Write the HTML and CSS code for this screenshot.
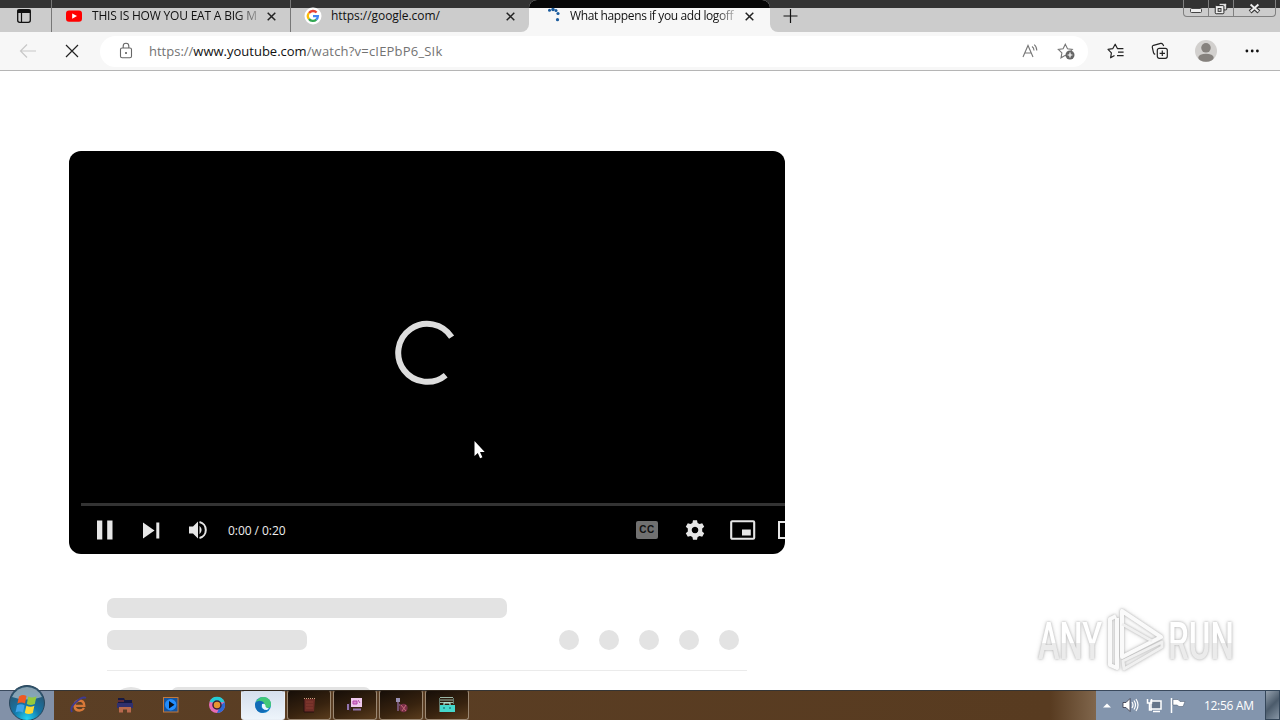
FILE: index.html
```
<!DOCTYPE html>
<html lang="en">
<head>
    <meta charset="UTF-8">
    <title>What happens if you add logoff</title>
    <link rel="stylesheet" href="styles.css">
</head>
<body>
<div class="tabs">
    <div class="tab-menu">
        <svg width="16" height="16" viewBox="0 0 16 16"><rect x="1.7" y="1.7" width="12.6" height="12.6" rx="2" fill="none" stroke="#111" stroke-width="1.3"/><path d="M2 2h12v2.500H2zM5.500 5v9" fill="#111" stroke="#111" stroke-width="1.2"/></svg>
    </div>
    <div class="tab tab-first">
        <svg class="favicon" width="18" height="18" viewBox="0 0 18 18"><rect x="1" y="3.4" width="16" height="11.4" rx="3" fill="#f00"/><path d="M7.2 6.4v5.4L12 9.1z" fill="#fff"/></svg>
        <span class="title fade-title">THIS IS HOW YOU EAT A BIG M</span>
        <svg class="close" width="11" height="11" viewBox="0 0 11 11"><path d="M1.7 1.7l7.6 7.6M9.3 1.7L1.7 9.3"/></svg>
    </div>
    <div class="tab tab-second">
        <svg class="favicon" width="18" height="18" viewBox="0 0 18 18"><circle cx="9" cy="9" r="8.5" fill="#fff"/><g fill="none" stroke-width="2.3"><path d="M5 6A5 5 0 0 1 12.6 5.5" stroke="#ea4335"/><path d="M5 5.9A5 5 0 0 0 5 12.1" stroke="#fbbc05"/><path d="M5 12A5 5 0 0 0 12.3 12.7" stroke="#34a853"/><path d="M9 9.2h4.9A5 5 0 0 1 12.2 12.7" stroke="#4285f4"/></g></svg>
        <span class="title">https://google.com/</span>
        <svg class="close" width="11" height="11" viewBox="0 0 11 11"><path d="M1.7 1.7l7.6 7.6M9.3 1.7L1.7 9.3"/></svg>
    </div>
    <div class="tab tab-active">
        <svg class="favicon" width="18" height="18" viewBox="0 0 18 18" fill="#1b5c9e"><circle cx="4.500" cy="3.300" r="1.500"/><circle cx="8" cy="2.500" r="1.800"/><circle cx="11" cy="3.500" r="1.500"/><circle cx="13" cy="6.500" r="1.600"/><circle cx="12.5" cy="12.7" r="1.600"/></svg>
        <span class="title fade-title">What happens if you add logoff</span>
        <svg class="close" width="11" height="11" viewBox="0 0 11 11"><path d="M1.7 1.7l7.6 7.6M9.3 1.7L1.7 9.3"/></svg>
    </div>
    <div class="tabs-rest">
        <svg class="new-tab" width="16" height="16" viewBox="0 0 16 16"><path d="M8.5 1v14M1.5 8h14" stroke="#111" stroke-width="1.2"/></svg>
        <div class="window-buttons">
            <div class="wb wb-min"><svg width="24" height="16" viewBox="0 0 24 16"><rect x="6.500" y="8.5" width="11" height="4" rx="1" fill="#eee" stroke="#444"/></svg></div>
            <div class="wb wb-max"><svg width="24" height="16" viewBox="0 0 25 16"><rect x="10.5" y="3" width="8" height="7" rx="1" fill="#ddd" stroke="#222"/><rect x="6.5" y="5.5" width="9" height="8.5" rx="1" fill="#eee" stroke="#222"/><rect x="9.5" y="8.5" width="3" height="3" fill="#ccc" stroke="#333"/></svg></div>
            <div class="wb wb-close"><svg width="41" height="16" viewBox="0 0 42 16"><path d="M16.5 4l9 8M25.5 4l-9 8" stroke="#333" stroke-width="4.2"/><path d="M17 4.500l8 7M25 4.500l-8 7" stroke="#eee" stroke-width="2"/></svg></div>
        </div>
    </div>
</div>

<div class="toolbar">
    <svg class="back" width="18" height="16" viewBox="0 0 18 16"><path d="M17 8H2M8 1.5L1.5 8 8 14.5" fill="none" stroke="#c8c8c8" stroke-width="1.2"/></svg>
    <svg class="stop" width="14" height="14" viewBox="0 0 14 14"><path d="M1 1l12 12M13 1L1 13" stroke="#222" stroke-width="1.2"/></svg>
    <div class="address">
        <svg class="lock" width="14" height="18" viewBox="0 0 14 18"><rect x="1.5" y="6" width="11" height="9.8" rx="1.6" fill="none" stroke="#666" stroke-width="1.1"/><path d="M4.2 6V4a2.8 2.8 0 0 1 5.6 0v2" fill="none" stroke="#666" stroke-width="1.1"/><circle cx="7" cy="11" r="1" fill="#555"/></svg>
        <div class="url"><span class="url-a">https://</span><b class="url-b">www.youtube.com</b><span class="url-c">/watch?v=cIEPbP6_SIk</span></div>
        <svg class="read" width="18" height="18" viewBox="0 0 18 18" fill="none" stroke="#777" stroke-width="1.1"><path d="M2 15L7 3.5 12 15M3.7 11h6.6M11 4.5q2 1.3 2 4M13.2 2.6q2.6 2 2.6 6"/></svg>
        <svg class="fav-add" width="18" height="18" viewBox="0 0 18 18"><path d="M9.5 14L8.3 13.3 4 15.8l.9-4.9L1.3 7.4l4.8-.7L8.3 2.2l2.2 4.5 4.8.7-1.5 1.5" fill="none" stroke="#777" stroke-width="1.1"/><circle cx="13" cy="13" r="4.5" fill="#666"/><path d="M13 10.6v4.8M10.6 13h4.8" stroke="#fff" stroke-width="1.2"/></svg>
    </div>
    <svg class="favorites" width="18" height="18" viewBox="0 0 18 18" fill="none" stroke="#222" stroke-width="1.2"><path d="M7.5 13.4l-3.9 2.4.8-4.9L1 7.4l4.7-.7L8.2 2.2l2.2 4.4h6M11 10.2h5.6M10 13.6h6.6" stroke-linejoin="round"/></svg>
    <svg class="collections" width="18" height="18" viewBox="0 0 18 18" fill="none" stroke="#222" stroke-width="1.2"><rect x="6.3" y="6.3" width="10" height="10" rx="2"/><path d="M11.3 8.6v5.4M8.6 11.3H14M4.2 12.3Q2.8 12 2.5 10.6L1.3 5.3Q1 3.8 2.5 3.3L9.7 1.4Q11 1.2 11.8 2.3L12.7 4"/></svg>
    <svg class="profile" width="22" height="22" viewBox="0 0 22 22"><circle cx="11" cy="11" r="11" fill="#d2d0ce"/><circle cx="11" cy="7.8" r="4.8" fill="#85817d"/><ellipse cx="11" cy="17.7" rx="7.7" ry="4" fill="#85817d"/></svg>
    <svg class="more" width="14" height="4" viewBox="0 0 14 4" fill="#111"><circle cx="1.9" cy="2" r="1.4"/><circle cx="7.2" cy="2" r="1.4"/><circle cx="12.4" cy="2" r="1.4"/></svg>
</div>

<div class="page">
    <div class="player">
        <div class="screen">
            <svg width="66" height="66" viewBox="0 0 66 66"><path d="M58.6 18.1A29 29 0 1 0 52.7 56.2" fill="none" stroke="#ddd" stroke-width="6"/></svg>
        </div>
        <div class="progress"></div>
        <div class="controls">
            <svg class="pause" width="16" height="20" viewBox="0 0 16 20" fill="#e6e6e6"><path d="M0 .5h5.3v19H0zM10.2.5h5.3v19h-5.3z"/></svg>
            <svg class="next" width="17" height="17" viewBox="0 0 17 17" fill="#e6e6e6"><path d="M0 .5l11.5 8L0 16.5zM13.3.5h3v16h-3z"/></svg>
            <svg class="volume" width="20" height="20" viewBox="0 0 20 20"><path d="M1 6.5h4l5-5v17l-5-5H1zM11.5 5.8q4.2 4.2 0 8.4z" fill="#e6e6e6"/><path d="M11.5 2.1a8.1 8.1 0 0 1 0 15.8" fill="none" stroke="#e6e6e6" stroke-width="2"/></svg>
            <span class="time">0:00 / 0:20</span>
            <div class="cc">CC</div>
            <svg class="gear" width="20" height="20" viewBox="0 0 20 20"><path fill="#e6e6e6" fill-rule="evenodd" d="M8 .3h4l.6 2.6 2 1.2 2.6-.9 2 3.5-2 1.9v2.8l2 1.9-2 3.5-2.6-.9-2 1.2-.6 2.6H8l-.6-2.6-2-1.2-2.6.9-2-3.5 2-1.9V8.600l-2-1.900 2-3.500 2.600.9 2-1.200zM10 6.700a3.300 3.300 0 1 0 .01 0z"/></svg>
            <svg class="mini" width="26" height="20" viewBox="0 0 26 20"><rect x="1.2" y="1.200" width="23" height="17.500" rx="1" fill="none" stroke="#e6e6e6" stroke-width="2.100"/><path d="M12 9.500h8.800v6H12z" fill="#e6e6e6"/></svg>
            <div class="theater"></div>
        </div>
    </div>

    <div class="skeleton">
        <div class="bar bar-long"></div>
        <div class="row">
            <div class="bar bar-short"></div>
            <div class="dots"><i></i><i></i><i></i><i></i><i></i></div>
        </div>
        <div class="owner">
            <div class="avatar"></div>
            <div class="bar bar-owner"></div>
        </div>
    </div>
</div>

<div class="taskbar">
    <div class="start">
        <svg width="54" height="36" viewBox="0 0 54 36">
            <defs><radialGradient id="orb" cx=".5" cy=".95" r=".85"><stop offset="0" stop-color="#20d4f4"/><stop offset=".45" stop-color="#1476a8"/><stop offset="1" stop-color="#2d536c"/></radialGradient></defs>
            <circle cx="27" cy="19" r="17.500" fill="url(#orb)" stroke="#29465c"/>
            <path d="M12 13Q17 3 27 3T42 13Q27 18 12 13z" fill="#b8cbd6" opacity=".65"/>
            <path d="M19 12.500q4-2.500 7.500-.5L25 19.500q-4-2-7.600.1z" fill="#ee5a24"/>
            <path d="M28.300 12.600q4 2 8.200-.4L34.800 20q-4 2-8 .1z" fill="#95c93d"/>
            <path d="M17 21.300q4-2 7.600 0L23 28.500q-4-2-7.500 0z" fill="#3fa3e8"/>
            <path d="M26.400 21.800q4 2 8-.1L32.800 29q-4 2-8 .1z" fill="#fdd835"/>
        </svg>
    </div>
    <div class="pinned">
        <svg width="18" height="18" viewBox="0 0 18 18" fill="none"><path d="M4.500 9.800h9.800Q14 4.500 9.300 4.500 4.500 5 4.500 10q.5 4.500 5 4.500 3 0 4.500-2.500" stroke="#d87838" stroke-width="2.300"/><path d="M2 16Q-.5 12 6 6T16 2" stroke="#3e3b91" stroke-width="1.800"/></svg>
        <svg width="18" height="18" viewBox="0 0 18 18"><path d="M2 2h6l1 2h7v5H2z" fill="#171942"/><path d="M1 7h16v5H1z" fill="#30306e"/><path d="M3 16.500V11h12v5.500h-4v-3H7v3z" fill="#b9694d"/><path d="M2 5h6" stroke="#a33f32"/></svg>
        <svg width="18" height="18" viewBox="0 0 18 18"><rect x="1.500" y="1.500" width="14.500" height="14.500" fill="#17539a" stroke="#c1793d"/><circle cx="8.700" cy="8.700" r="5.700" fill="#228eff"/><path d="M7 5v7.500l5.500-3.700z" fill="#07101d"/></svg>
        <svg width="18" height="18" viewBox="0 0 18 18"><circle cx="9" cy="9" r="8" fill="#e66cb5"/><path d="M1.500 6A8 8 0 0 1 16.500 6L9 7z" fill="#24cdd5"/><path d="M16.500 6A8 8 0 0 1 9 17l3-7z" fill="#2c69d5"/><circle cx="9" cy="9" r="4" fill="#e99530" stroke="#38203b" stroke-width="1.500"/></svg>
    </div>
    <div class="windows">
        <div class="task task-on"><svg width="18" height="18" viewBox="0 0 18 18"><circle cx="9" cy="9" r="8" fill="#1688ce"/><path d="M2 6Q5 .5 10 1q7 1 7 7.500 0 4-5 3.500-2-.5-1-2 0-3-3-3-3 .2-6-1z" fill="#42c878"/><path d="M1 8q2-4 6-3 3 .5 3 3-3-.5-3.500 2Q7 14 14 14 8 19 3.500 15 1 12 1 8z" fill="#126bb6"/><path d="M8 8q3-1 3.500 1.500Q11 12 15 12.300l-2 1.700Q7 14 8 8z" fill="#eaf5ff"/></svg></div>
        <div class="task"><svg width="18" height="18" viewBox="0 0 18 18"><path d="M4 3h11l-1 13H4z" fill="#6e2d26"/><path d="M4 3v13h10" stroke="#281010" fill="none"/><path d="M4 2.500h11" stroke="#d09d81" stroke-dasharray="1 1"/><path d="M6 6h7M6 9h7M6 12h7" stroke="#863d31"/></svg></div>
        <div class="task"><svg width="18" height="18" viewBox="0 0 18 18"><path d="M5 2h11v9H5z" fill="#efc9ee"/><path d="M7 5h4v3H7zM12 4l2 3" stroke="#b440ab" fill="#d889d2"/><path d="M2 8v6M7 13.500h8" stroke="#9174ae" stroke-width="2" fill="none"/><path d="M4 7v8" stroke="#3a2446"/></svg></div>
        <div class="task"><svg width="18" height="18" viewBox="0 0 18 18"><path d="M4 2h4v4H4z" fill="#9a91b3"/><path d="M6 6v9M6 8l5 3" stroke="#73516d" stroke-width="2"/><circle cx="11.500" cy="12" r="4.200" fill="#792f48"/><path d="M9 9l5 6M14 9l-4 6" stroke="#c76b79"/></svg></div>
        <div class="task"><svg width="18" height="18" viewBox="0 0 18 18"><path d="M2 1.500h13M2 4h13M2 6.500h13" stroke="#9bb8a7"/><path d="M1.500 2v14M15.500 2v6" stroke="#62796d"/><path d="M2 9h15v7H2z" fill="#45d8cc"/><path d="M6 9V7h6v2" stroke="#c5fff1" fill="none"/><path d="M6 11v2M12 11v2" stroke="#145c5d"/></svg></div>
    </div>
    <div class="tray">
        <svg class="arrow" width="8" height="5" viewBox="0 0 8 5"><path d="M0 4.500L4 .5l4 4z" fill="#fff"/></svg>
        <svg class="sound" width="17" height="14" viewBox="0 0 17 14"><path d="M1 4.500h3l4-4v13l-4-4H1z" fill="#fff" stroke="#334" stroke-width=".8"/><path d="M10 4q2 3 0 6M12 2.500q3 4.500 0 9M14 1q4 6 0 12" fill="none" stroke="#fff" stroke-width="1.200"/></svg>
        <svg class="network" width="17" height="15" viewBox="0 0 17 15"><path d="M5 3h10v8H5z" fill="#65758a" stroke="#fff" stroke-width="1.500"/><path d="M7 13.500h7M1.500 1v4h4V1M3.500 5v7H6" stroke="#fff" stroke-width="1.500" fill="none"/></svg>
        <svg class="flag" width="16" height="15" viewBox="0 0 16 15"><path d="M1.500 0v15" stroke="#fff" stroke-width="1.500"/><path d="M3 1.500h5l2 2h5l-2 5H9L7 7H3z" fill="#fff" stroke="#45546a" stroke-width=".5"/></svg>
        <span class="clock">12:56 AM</span>
        <div class="show-desktop"></div>
    </div>
</div>

<svg class="cursor" width="12" height="20" viewBox="0 0 12 20"><path d="M.5 1v15l3.300-3 2.300 5.300 2.300-1L6 12h4.700z" fill="#fff"/></svg>

<!-- watermark -->
<svg class="watermark" width="215" height="72" viewBox="0 0 215 72">
    <defs><linearGradient id="wm" x1="0" y1="0" x2="0" y2="1"><stop offset=".53" stop-color="#fff"/><stop offset=".53" stop-color="#ebebeb"/></linearGradient></defs>
    <g fill="url(#wm)">
        <text x="8" y="53" textLength="64" lengthAdjust="spacingAndGlyphs">ANY</text>
        <text x="138" y="53" textLength="66" lengthAdjust="spacingAndGlyphs">RUN</text>
    </g>
    <g fill="none" stroke-width="4" stroke-linejoin="round">
        <path d="M86 10l-6 3v46l7 3V12" stroke="#fafafa"/>
        <path d="M92 5v46L131 31z" stroke="#fafafa"/>
        <path d="M92 18l30 17M93 55l39-19v5L94 63z" stroke="#f0f0f0" stroke-width="3"/>
    </g>
</svg>
</body>
</html>
```
FILE: styles.css
```
*{margin: 0; padding: 0; box-sizing: border-box}
html, body {
    width: 1280px;
    height: 720px;
    overflow: hidden;
}
body {
    display: flex;
    flex-direction: column;
    position: relative;
    background: white;
    font-family: "Open Sans", "Noto Sans", sans-serif;
    font-size: 12px;
}
svg {
    display: block;
    flex: none;
}
/* Tabs */
.tabs {
    display: flex;
    height: 32px;
    background: #f7f7f7;
}
.tab-menu, .tab, .tabs-rest {
    display: flex;
    align-items: center;
    height: 32px;
    background: linear-gradient(#333333 8px, #cccccc 8px);
}
.tab-menu {
    width: 52px;
    padding-left: 16px;
    border-right: 1px solid #777777;
}
.tab-first {
    width: 239px;
    padding-left: 13px;
    border-right: 1px solid #777777;
}
.tab-second {
    width: 238px;
    padding-left: 13px;
    border-bottom-right-radius: 8px;
}
.tab-active {
    width: 241px;
    padding-left: 16px;
    background: linear-gradient(#080808 8px, #f7f7f7 8px);
    border-radius: 8px 8px 0 0;
    box-shadow: 0 -8px 0 #333333;
}
.title {
    width: 168px;
    margin-left: 9px;
    overflow: hidden;
    white-space: nowrap;
    color: #111111;
    line-height: 20px;
}
.tab-first .title {letter-spacing: -0.2px}
.tab-active .title {letter-spacing: -0.38px; margin-left: 7px}
.tab-second .title {letter-spacing: -0.05px}
.fade-title {
    -webkit-mask-image: linear-gradient(90deg, black 145px, transparent 172px);
    mask-image: linear-gradient(90deg, black 145px, transparent 172px);
}
.close {
    margin-left: 6px;
    stroke: #222222;
    stroke-width: 1.5;
}
.tabs-rest {
    flex: 1;
    border-bottom-left-radius: 8px;
}
.new-tab {
    margin-left: 12px;
}
.window-buttons {
    display: flex;
    align-self: flex-start;
    height: 17px;
    margin: 0 4px 0 auto;
    border: 1px solid #808080;
    border-top: 0;
    border-radius: 0 0 4px 4px;
}
.wb + .wb {
    border-left: 1px solid #808080;
}
/* Address line */
.toolbar {
    display: flex;
    align-items: center;
    height: 39px;
    padding: 0 21px 0 19px;
    background: #f7f7f7;
    border-bottom: 1px solid #b5b5b5;
}
.stop {
    margin-left: 28px;
}
.address {
    display: flex;
    flex: none;
    align-items: center;
    width: 988px;
    height: 31px;
    margin-left: 21px;
    padding-left: 19px;
    background: white;
    border-radius: 16px;
}
.url {
    display: flex;
    margin-left: 16px;
    color: #737373;
    font-size: 13px;
    line-height: 20px;
}
.url-b {
    color: #111111;
    font-weight: normal;
}
.url-c {
    letter-spacing: 0.2px;
}
.read {
    margin-left: auto;
}
.fav-add {
    margin: 0 13px 0 18px;
}
.favorites {
    margin-left: 19px;
}
.collections {
    margin-left: 26px;
}
.profile {
    margin-left: 26px;
}
.more {
    margin-left: 28px;
}
/* Page */
.page {
    height: 619px;
    padding: 80px 0 0 69px;
    overflow: hidden;
}
.player {
    display: flex;
    flex-direction: column;
    width: 716px;
    height: 403px;
    overflow: hidden;
    background: black;
    border-radius: 12px;
}
.screen {
    height: 352px;
    padding: 168px 0 0 324px;
}
.progress {
    height: 3px;
    margin-left: 12px;
    background: #333333;
}
.controls {
    display: flex;
    align-items: center;
    height: 48px;
    padding-left: 28px;
}
.next {
    margin-left: 30px;
}
.volume {
    margin-left: 28px;
}
.time {
    flex: none;
    width: 70px;
    margin-left: 20px;
    color: #eeeeee;
    white-space: nowrap;
    letter-spacing: -0.05px;
}
.cc {
    flex: none;
    width: 22px;
    height: 18px;
    margin-left: 338px;
    background: #707070;
    border-radius: 2px;
    color: #111111;
    font: bold 10px/18px "Liberation Sans", sans-serif;
    letter-spacing: 0.5px;
    text-align: center;
}
.gear {
    margin-left: 27px;
}
.mini {
    margin-left: 25px;
}
.theater {
    flex: none;
    width: 26px;
    height: 18px;
    margin-left: 22px;
    border: 2px solid #e6e6e6;
}
/* Placeholders */
.skeleton {
    width: 640px;
    margin: 44px 0 0 38px;
}
.bar {
    height: 20px;
    background: #e3e3e3;
    border-radius: 7px;
}
.bar-long {width: 400px}
.bar-short {width: 200px}
.bar-owner {width: 200px}
.row {
    display: flex;
    justify-content: space-between;
    height: 53px;
    padding: 12px 8px 0 0;
    border-bottom: 1px solid #ebebeb;
}
.dots {
    display: flex;
    gap: 20px;
}
.dots i {
    width: 20px;
    height: 20px;
    background: #e3e3e3;
    border-radius: 50%;
}
.owner {
    display: flex;
    gap: 20px;
    padding: 16px 0 0 4px;
}
.avatar {
    width: 40px;
    height: 40px;
    background: #e3e3e3;
    border-radius: 50%;
}
/* Taskbar */
.taskbar {
    display: flex;
    height: 30px;
    background: linear-gradient(90deg, #5b3f25 0, #583b20 1050px, #80664c 1096px);
    box-shadow: inset 0 1px 0 #343434;
}
.start {
    width: 54px;
    height: 30px;
    background: linear-gradient(#3b4a5d 1px, #8291a8 1px);
}
.start svg {
    margin-top: -6px;
}
.pinned {
    display: flex;
    align-items: center;
    gap: 28px;
    width: 187px;
    padding-left: 16px;
}
.windows {
    display: flex;
    gap: 2px;
}
.task {
    display: flex;
    align-items: center;
    justify-content: center;
    width: 44px;
    height: 30px;
    background: linear-gradient(160deg, #160e08, #38230f 60%, #5a3c1d);
    border: 1px solid #9b8873;
    border-top-color: #30261c;
    border-radius: 3px;
}
.task-on {
    background: linear-gradient(#d5dfed, #edf4fb);
    border-color: #e8eef5;
    border-top-color: #30261c;
}
.tray {
    display: flex;
    align-items: center;
    width: 184px;
    margin-left: auto;
    padding-left: 7px;
    background: linear-gradient(#3b4a5d 1px, #8395ad 1px);
}
.sound {
    margin-left: 11px;
}
.network {
    margin-left: 7px;
}
.flag {
    margin-left: 7px;
}
.clock {
    width: 52px;
    margin-left: 18px;
    color: white;
    white-space: nowrap;
    letter-spacing: -0.3px;
}
.show-desktop {
    width: 15px;
    height: 30px;
    margin-left: auto;
    background: linear-gradient(135deg, #95a1ae, #4b5b6b 50%, #8796a6);
    border: 1px solid #35475a;
}
/* Over the page */
.cursor {
    position: absolute;
    left: 474px;
    top: 440px;
}
.watermark {
    position: absolute;
    left: 1030px;
    top: 606px;
    filter: drop-shadow(0 0 1px #b5b5b5) drop-shadow(0 0 2px #dddddd);
}
.watermark text {
    font: 500 52px Roboto, sans-serif;
}
```
